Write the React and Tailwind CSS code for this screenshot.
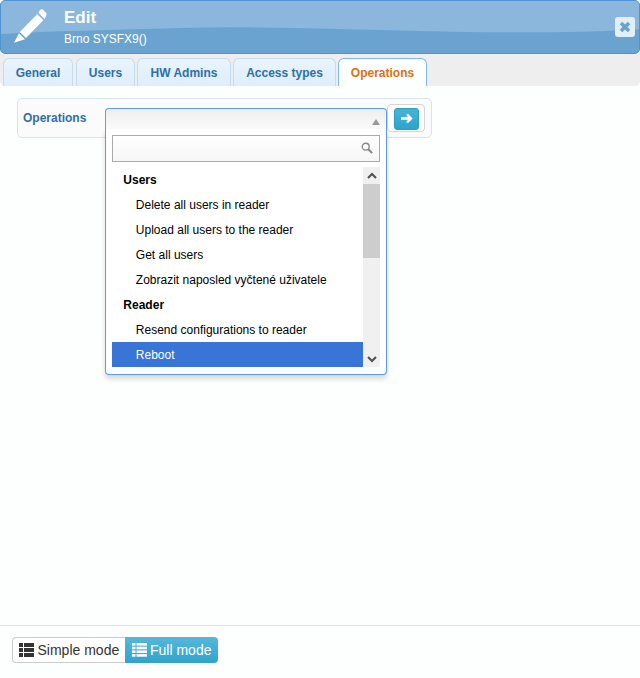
import React from "react";

const Pencil = () => (
  <svg width="36" height="36" viewBox="0 0 36 36" className="block">
    <path d="M1 34.7 L6 25.3 L12 31.3 Z" fill="#fff" />
    <path d="M6.8 24 L24.3 6 L30.3 12.3 L13 30 Z" fill="#fff" />
    <path d="M25.5 4.7 L27 2 Q28.5 0.6 30 1.6 L33.2 5 Q34 6.5 33 8 L31.5 11 Z" fill="#fff" />
  </svg>
);

const Tab = ({ children, active, w }) => (
  <div
    className={`h-7 rounded-t-[6px] border border-b-0 flex items-center justify-center text-xs font-bold ${w} ${
      active
        ? "border-[#7db8ee] bg-gradient-to-b from-[#ffffff] to-[#fdfefe] text-[#e0700f]"
        : "border-[#c5dbee] bg-gradient-to-b from-[#e9f4fd] to-[#deeefb] text-[#2f6fa8]"
    }`}
  >
    {children}
  </div>
);

const Item = ({ children, selected }) => (
  <div className={`h-[25px] pl-[23.5px] flex items-center text-xs ${selected ? "bg-[#3875d7] text-white" : "text-black"}`}>
    {children}
  </div>
);

const Group = ({ children }) => <div className="h-[25px] pl-[11px] flex items-center text-xs font-bold text-black">{children}</div>;

const LargeIcon = () => (
  <svg width="15" height="14" viewBox="0 0 15 14" className="block">
    {[0, 5, 10].map((y) => (
      <g key={y} fill="#333333">
        <rect x="0" y={y} width="4" height="4" />
        <rect x="5" y={y} width="10" height="4" />
      </g>
    ))}
  </svg>
);

const ListIcon = () => (
  <svg width="15" height="14" viewBox="0 0 15 14" className="block">
    {[0, 3.7, 7.4, 11.1].map((y) => (
      <g key={y} fill="#ffffff">
        <rect x="0" y={y} width="3.5" height="2.6" />
        <rect x="4.5" y={y} width="10.5" height="2.6" />
      </g>
    ))}
  </svg>
);

export default function App() {
  return (
    <div className="w-[640px] h-[678px] bg-[#fdfefe] flex flex-col font-['Liberation_Sans',Arial,sans-serif]">
      <div className="relative h-[54px] shrink-0 rounded-[5px] border border-[#4f94d0] bg-[#6ba3d0] overflow-hidden flex items-start">
        <svg className="absolute left-0 top-0" width="640" height="54" viewBox="0 0 640 54" preserveAspectRatio="none">
          <path d="M0 0 H640 V28 C580 32 500 32 420 30 C340 28 260 25 180 27 C110 29 50 30 0 33 Z" fill="#8ab7db" />
        </svg>
        <div className="relative ml-[12px] mt-[7px]">
          <Pencil />
        </div>
        <div className="relative ml-[15px] text-white">
          <div className="text-[17px] font-bold leading-[18px] mt-[8px]">Edit</div>
          <div className="text-xs leading-[14px] mt-[5px]">Brno SYSFX9()</div>
        </div>
        <div className="relative ml-auto mr-[4px] mt-[16px] w-5 h-5 rounded-[3px] bg-[#e2eef8] flex items-center justify-center">
          <svg width="12" height="12" viewBox="0 0 12 12">
            <path d="M2 2 L10 10 M10 2 L2 10" stroke="#6ba3d0" strokeWidth="3.6" />
          </svg>
        </div>
      </div>

      <div className="h-8 shrink-0 bg-[#eeeeee] rounded-b-[5px] flex items-end pl-[3px] gap-[2px]">
        <Tab w="w-[70px] mr-px">General</Tab>
        <Tab w="w-[59px]">Users</Tab>
        <Tab w="w-[94px]">HW Admins</Tab>
        <Tab w="w-[103px]">Access types</Tab>
        <Tab w="w-[89px]" active>Operations</Tab>
      </div>

      <div className="flex-1 min-h-0 pt-3 pl-[17px]">
        <div className="relative w-[415px] h-10 rounded-[5px] border border-[#d5e4f2] bg-[#fbfbfb] flex items-start">
          <div className="ml-[5px] mt-[12px] text-xs font-bold leading-[14px] text-[#2f6fa8]">Operations</div>
          <div className="relative ml-[19px] mt-[9px] w-[282px] h-[22px]">
            <div className="h-[22px] rounded-t-[4px] border border-[#5b9bf5] border-b-[#aaaaaa] bg-gradient-to-b from-[#eeeeee] to-[#fafafa] relative">
              <svg width="8" height="6" viewBox="0 0 8 6" className="absolute right-[6px] top-[10px]">
                <path d="M4 0 L8 6 L0 6 Z" fill="#999" />
              </svg>
            </div>
            <div className="absolute z-10 left-0 right-0 top-[21px] h-[246px] bg-white border border-[#5b9bf5] border-t-0 rounded-b-[4px] shadow-[0_4px_5px_rgba(0,0,0,0.15)] px-[6px] pt-[6px]">
              <div className="h-[27px] border border-[#aaaaaa] bg-gradient-to-b from-[#ffffff] to-[#f6f6f6] relative">
                <svg width="12" height="12" viewBox="0 0 14 14" className="absolute right-[6px] top-[6px]">
                  <circle cx="5.5" cy="5.5" r="4" fill="none" stroke="#888" strokeWidth="1.6" />
                  <path d="M8.5 8.5 L13 13" stroke="#888" strokeWidth="2.4" />
                </svg>
              </div>
              <div className="relative mt-[5px] h-[200px] flex">
                <div className="flex-1 min-w-0">
                  <Group>Users</Group>
                  <Item>Delete all users in reader</Item>
                  <Item>Upload all users to the reader</Item>
                  <Item>Get all users</Item>
                  <Item>Zobrazit naposled vyčtené uživatele</Item>
                  <Group>Reader</Group>
                  <Item>Resend configurations to reader</Item>
                  <Item selected>Reboot</Item>
                </div>
                <div className="w-[17px] bg-[#f0f0f0] flex flex-col">
                  <div className="h-[17px] flex items-center justify-center">
                    <svg width="10" height="8" viewBox="0 0 10 8"><path d="M1 6 L5 2 L9 6" fill="none" stroke="#505050" strokeWidth="2" /></svg>
                  </div>
                  <div className="h-[74px] bg-[#cdcdcd]" />
                  <div className="flex-1" />
                  <div className="h-[17px] flex items-center justify-center">
                    <svg width="10" height="8" viewBox="0 0 10 8"><path d="M1 2 L5 6 L9 2" fill="none" stroke="#505050" strokeWidth="2" /></svg>
                  </div>
                </div>
              </div>
            </div>
          </div>
          <div className="mt-[5px] w-[38px] h-[28px] rounded-[4px] border border-[#d5d5d5] bg-white flex items-center justify-center">
            <div className="w-[25px] h-[22px] mt-px rounded-[3px] bg-gradient-to-b from-[#46b4d6] to-[#2fa3cc] border border-[#2b9cc4] flex items-center justify-center">
              <svg width="13" height="11" viewBox="0 0 13 11">
                <path d="M1 5.5 H10 M7 1.5 L11 5.5 L7 9.5" fill="none" stroke="#fff" strokeWidth="2.4" />
              </svg>
            </div>
          </div>
        </div>
      </div>

      <div className="h-[53px] shrink-0 border-t border-[#e2e2e2] pl-3 pt-[11px]">
        <div className="flex w-[206px] h-[26px] text-[14px]">
          <div className="w-[113px] rounded-l-[4px] border border-r-0 border-[#cccccc] bg-white text-[#333333] flex items-center pl-[6px] gap-[3.5px]">
            <LargeIcon />
            <span>Simple mode</span>
          </div>
          <div className="flex-1 rounded-r-[4px] bg-gradient-to-b from-[#55b8d9] to-[#2fa3cc] text-white flex items-center pl-[7px] gap-[3px]">
            <ListIcon />
            <span>Full mode</span>
          </div>
        </div>
      </div>
    </div>
  );
}
